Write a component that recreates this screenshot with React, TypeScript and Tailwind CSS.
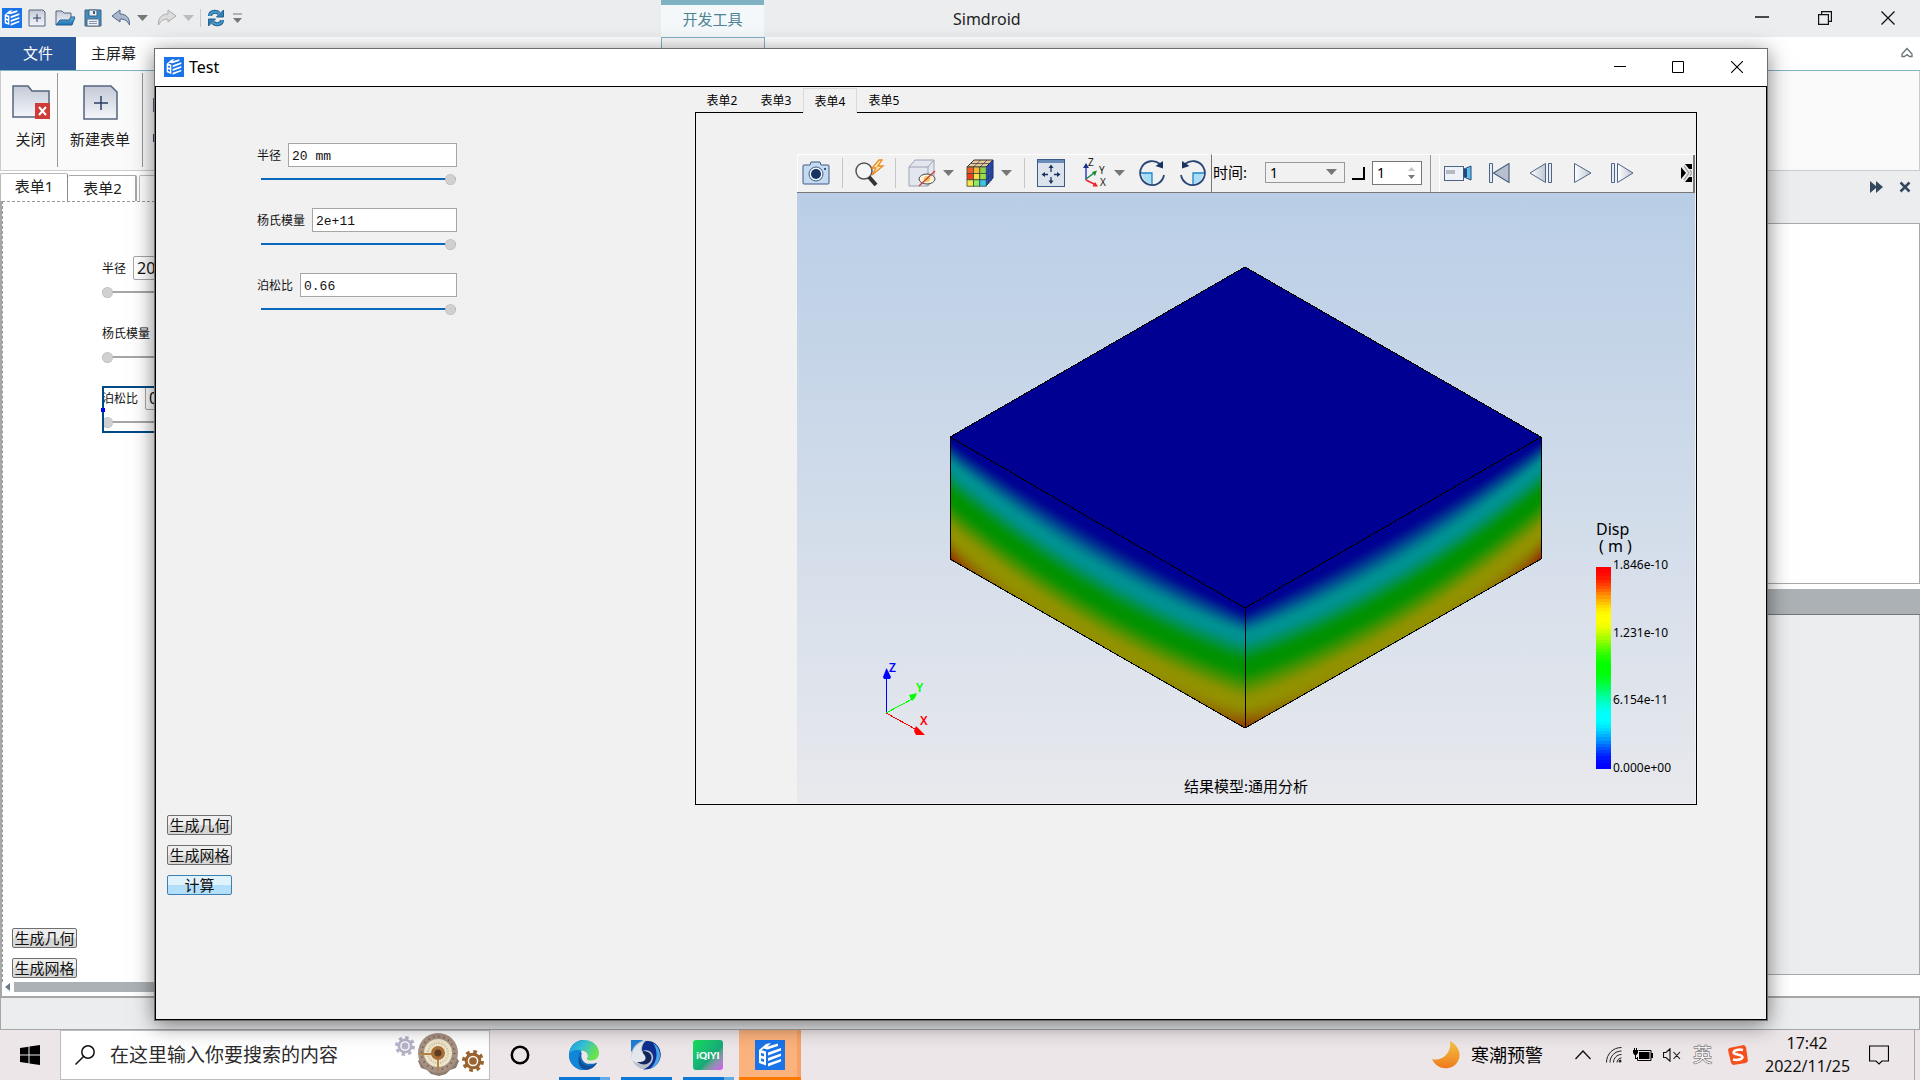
import { useState } from 'react';
import type { ReactNode } from 'react';
import clsx from 'clsx';

const JET = [
  [0, 0, 1],
  [0, 1, 1],
  [0, 1, 0],
  [1, 1, 0],
  [1, 0, 0],
];

// value 0..1 -> rgb, full is the brightest channel; eased so that every hue keeps a flat band
function jet(value: number, full: number) {
  const v = Math.min(Math.max(value, 0), 1) * 4;
  const i = Math.min(Math.floor(v), 3);
  const linear = v - i;
  const f = linear * linear * (3 - 2 * linear);
  const mix = JET[i].map((c, k) => Math.round((c + (JET[i + 1][k] - c) * f) * full));
  return `rgb(${mix[0]},${mix[1]},${mix[2]})`;
}

function lerp(stops: number[], value: number) {
  const v = Math.min(value * 4, 3.999);
  const i = Math.floor(v);
  return stops[i] + (stops[i + 1] - stops[i]) * (v - i);
}

// depth of every contour below the top edge: at the corners and in the middle of a face
const EDGE = [0.0, 0.23, 0.48, 0.78, 1.12];
const MIDDLE = [0.06, 0.38, 0.63, 0.93, 1.5];

function contour(value: number, x0: number, x1: number, y0: number, y1: number, height: number) {
  const points: string[] = [];
  for (let n = 0; n <= 32; n++) {
    const t = n / 32;
    const bulge = Math.pow(Math.max(Math.sin(Math.PI * t), 0), 0.8);
    const depth = lerp(EDGE, value) * (1 - bulge) + lerp(MIDDLE, value) * bulge;
    const x = x0 + (x1 - x0) * t;
    const y = y0 + (y1 - y0) * t + depth * height;
    points.push(`${x.toFixed(1)},${y.toFixed(1)}`);
  }
  return [...points, `${x1},620`, `${x0},620`].join(' ');
}

const levels = Array.from({ length: 96 }, (_, i) => i / 95);

function Model() {
  return (
    <svg viewBox="0 0 898 610" className="absolute inset-0 h-full w-full" aria-hidden="true">
      <defs>
        <clipPath id="leftFace"><path d="M153 244 448 415V535L153 366Z" /></clipPath>
        <clipPath id="rightFace"><path d="M448 415 744 244V366L448 535Z" /></clipPath>
      </defs>
      <path d="M448 74 744 244 448 415 153 244Z" fill="#000092" />
      <g clipPath="url(#leftFace)">
        <path d="M153 244 448 415V535L153 366Z" fill="#000092" />
        {levels.map((v) => (
          <polygon key={v} points={contour(v, 153, 448, 244, 415, 121)} fill={jet(v, 146)} />
        ))}
      </g>
      <g clipPath="url(#rightFace)">
        <path d="M448 415 744 244V366L448 535Z" fill="#000092" />
        {levels.map((v) => (
          <polygon key={v} points={contour(v, 448, 744, 415, 244, 121)} fill={jet(v, 146)} />
        ))}
      </g>
      <path
        d="M448 74 744 244V366L448 535 153 366V244ZM153 244 448 415 744 244M448 415V535"
        fill="none"
        stroke="#000"
        shapeRendering="crispEdges"
      />
      {/* axis triad */}
      <g fill="none" shapeRendering="crispEdges">
        <path d="M89 520V486" stroke="#00f" />
        <path d="M89 520 117 505" stroke="#0f0" />
        <path d="M89 520 120 537" stroke="#f00" />
      </g>
      <path d="M89.500 475 94 484 93 486H87L86 484Z" fill="#00f" />
      <path d="M112 502 120 500 118 505 115 508Z" fill="#0f0" />
      <path d="M119 533 128 542H119L117 538Z" fill="#f00" />
      <g fontFamily="Noto Sans" fontSize="12" fontWeight="600">
        <text x="92" y="479" fill="#00f">Z</text>
        <text x="119" y="499" fill="#0f0">Y</text>
        <text x="123" y="532" fill="#f00">X</text>
      </g>
    </svg>
  );
}

function Logo({ className }: { className?: string }) {
  return (
    <svg viewBox="0 0 30 30" className={className} aria-hidden="true">
      <rect width="30" height="30" fill="#1a73e8" />
      <path d="M4 10 11 4 16 3 12.500 6.500 23 3.500V6L12.500 9.500 8.500 8.500 6.500 10.200 11 11.500V25.500L4 23Z" fill="#fff" />
      <path d="M6 13 9 13.800V16.500L6 15.500ZM6 18.300 9 19.300V22L6 21Z" fill="#1a73e8" />
      <path d="M13 12.500 26 8V10.500L13 15.500ZM13 18 26 13.500V16L13 21ZM13 23.500 26 19V21.500L13 26.500Z" fill="#fff" />
    </svg>
  );
}

function Caret({ color = '#777' }: { color?: string }) {
  return (
    <svg viewBox="0 0 11 6" className="h-[6px] w-[11px] shrink-0" aria-hidden="true">
      <path d="M0 0H11L5.500 6Z" fill={color} />
    </svg>
  );
}

function Steel() {
  return (
    <defs>
      <linearGradient id="steel" x1="0" y1="0" x2="0" y2="1">
        <stop offset="0" stopColor="#c3c9d6" />
        <stop offset="1" stopColor="#f4f6fa" />
      </linearGradient>
      <linearGradient id="silver" x1="0" y1="0" x2="1" y2="0">
        <stop offset="0" stopColor="#fff" />
        <stop offset="1" stopColor="#bfc6d2" />
      </linearGradient>
      <linearGradient id="sky" x1="0" y1="0" x2="0" y2="1">
        <stop offset="0" stopColor="#5ab6e2" />
        <stop offset="1" stopColor="#2070b0" />
      </linearGradient>
    </defs>
  );
}

/* ---------- background window ---------- */

function QuickAccess() {
  return (
    <div className="flex h-full items-center pb-px pl-[2px]">
      <Logo className="h-5 w-5" />
      <button aria-label="新建" className="ml-[6px]">
        <svg viewBox="0 0 18 18" className="h-[18px] w-[18px]">
          <Steel />
          <path d="M1 1H15L17 3V17H1Z" fill="url(#steel)" stroke="#54657f" />
          <path d="M5 9H13M9 5V13" stroke="#2b3f66" />
        </svg>
      </button>
      <button aria-label="打开" className="ml-[9px]">
        <svg viewBox="0 0 20 18" className="h-[18px] w-5">
          <path d="M1 16V2H7L9 4H16V9" fill="url(#steel)" stroke="#54657f" />
          <path d="M1 16 5 11H14L16 8H20L17 16Z" fill="url(#sky)" stroke="#245f90" />
        </svg>
      </button>
      <button aria-label="保存" className="ml-[9px]">
        <svg viewBox="0 0 18 18" className="h-[18px] w-[18px]">
          <path d="M1 1H17V17H1Z" fill="#3d8ec4" stroke="#44617f" />
          <path d="M5 1H13V7H5Z" fill="#e9eef4" stroke="#44617f" />
          <path d="M10 2V5" stroke="#44617f" strokeWidth="2" />
          <path d="M3 10H15V17H3Z" fill="#eef1f5" stroke="#5b6f88" />
          <path d="M5 12.500H13M5 14.500H13" stroke="#8b97a8" />
        </svg>
      </button>
      <button aria-label="撤销" className="ml-[9px]">
        <svg viewBox="0 0 20 18" className="h-[18px] w-5">
          <path d="M1 7 9 1V5C16 5 19 10 18.500 16 16.500 11.500 13 10 9 10V13Z" fill="#a9b8cd" stroke="#50678a" />
        </svg>
      </button>
      <span className="ml-[6px] flex"><Caret /></span>
      <button aria-label="重做" className="ml-[9px]">
        <svg viewBox="0 0 20 18" className="h-[18px] w-5">
          <path d="M19 7 11 1V5C4 5 1 10 1.500 16 3.500 11.500 7 10 11 10V13Z" fill="#dcdcdc" stroke="#aaa" />
        </svg>
      </button>
      <span className="ml-[6px] flex"><Caret color="#bcbcbc" /></span>
      <span className="ml-[6px] h-[18px] w-px bg-[#c8c8c8]" />
      <button aria-label="刷新" className="ml-[6px]">
        <svg viewBox="0 0 18 18" className="h-[18px] w-[18px]">
          <path d="M3 7C3 2.500 9 1.500 12 4.500" fill="none" stroke="#27618c" strokeWidth="4" />
          <path d="M3 7C3 2.500 9 1.500 12 4.500" fill="none" stroke="#3f9bd0" strokeWidth="2" />
          <path d="M16.500 1V8H9.500Z" fill="#2f82ba" stroke="#27618c" />
          <path d="M15 11C15 15.500 9 16.500 6 13.500" fill="none" stroke="#27618c" strokeWidth="4" />
          <path d="M15 11C15 15.500 9 16.500 6 13.500" fill="none" stroke="#3f9bd0" strokeWidth="2" />
          <path d="M1.500 17V10H8.500Z" fill="#2f82ba" stroke="#27618c" />
        </svg>
      </button>
      <svg viewBox="0 0 9 11" className="ml-2 h-[11px] w-[9px]" aria-hidden="true">
        <path d="M0 1H9" stroke="#777" />
        <path d="M0 5H9L4.500 10Z" fill="#777" />
      </svg>
    </div>
  );
}

function TitleBar() {
  return (
    <header className="relative flex h-[37px] shrink-0 items-center justify-between bg-[#ecedef]">
      <QuickAccess />
      <div className="absolute left-[661px] top-0 flex h-[37px] w-[103px] items-center justify-center border-t-[5px] border-[#7fb2c2] bg-[#f4f8fb] pb-1 text-[15px] text-[#4b8494]">
        开发工具
      </div>
      <div className="absolute left-[661px] top-[37px] z-10 h-[34px] w-[104px] border border-b-0 border-[#7fb2c2] bg-[#fafafa]" />
      <h1 className="absolute left-[953px] text-base text-[#222]">Simdroid</h1>
      <div className="flex items-center pb-px pr-px">
        <button aria-label="最小化" className="flex w-[63px] justify-center">
          <svg viewBox="0 0 14 14" className="h-[14px] w-[14px]"><path d="M0 6H14" stroke="#111" strokeWidth="1.500" /></svg>
        </button>
        <button aria-label="还原" className="flex w-[63px] justify-center">
          <svg viewBox="0 0 14 14" className="h-[14px] w-[14px]" fill="none" stroke="#111" strokeWidth="1.200">
            <path d="M.6 3.600H10.400V13.400H.6ZM3.600 3.600V.6H13.400V10.400H10.400" />
          </svg>
        </button>
        <button aria-label="关闭" className="flex w-[63px] justify-center">
          <svg viewBox="0 0 14 14" className="h-[14px] w-[14px]"><path d="M.5.5 13.500 13.500M13.500.5.5 13.500" stroke="#111" strokeWidth="1.300" /></svg>
        </button>
      </div>
    </header>
  );
}

function Ribbon() {
  return (
    <div className="shrink-0 text-[15px] text-[#222]">
      <nav className="flex h-[34px] items-center justify-between border-b border-[#7fb2c2] bg-white">
        <div className="flex h-full items-center">
          <button className="h-full w-[76px] bg-[#2a579a] pb-px text-white">文件</button>
          <button className="ml-[15px]">主屏幕</button>
        </div>
        <button aria-label="折叠功能区" className="mr-[7px] pb-[2px]">
          <svg viewBox="0 0 12 12" className="h-3 w-3">
            <path d="M1 7 6 1.500 11 7V9.500H8.500L6 7.500 3.500 9.500H1Z" fill="none" stroke="#6b7177" strokeWidth="1.300" />
          </svg>
        </button>
      </nav>
      <div className="flex h-[100px] items-start border border-t-0 border-[#ccc] bg-[#fafafa]">
        <button className="flex h-full w-[56px] flex-col items-center pl-[3px] pt-[14px]">
          <svg viewBox="0 0 38 34" className="h-[34px] w-[38px]">
            <path d="M1 1H16L20 6H37V32H1Z" fill="url(#steel)" stroke="#54657f" strokeWidth="1.500" />
            <rect x="23" y="18" width="15" height="16" fill="#cf3b37" />
            <path d="M27 22 34 30M34 22 27 30" stroke="#fff" strokeWidth="2" />
          </svg>
          <span className="mt-[9px] whitespace-nowrap">关闭</span>
        </button>
        <span className="mt-[2px] h-[94px] w-px bg-[#999]" />
        <button className="flex w-[84px] flex-col items-center pt-[14px]">
          <svg viewBox="0 0 35 35" className="h-[35px] w-[35px]">
            <path d="M1 1H28L34 7V34H1Z" fill="url(#steel)" stroke="#54657f" strokeWidth="1.500" />
            <path d="M11 18H25M18 11V25" stroke="#2b3f66" strokeWidth="1.500" />
          </svg>
          <span className="mt-2 whitespace-nowrap">新建表单</span>
        </button>
        <span className="mt-[2px] h-[94px] w-px bg-[#999]" />
        <svg viewBox="0 0 16 60" className="ml-[10px] mt-[24px] h-[60px] w-4" aria-hidden="true">
          <rect x=".5" y="3.500" width="15" height="13" fill="url(#steel)" stroke="#54657f" />
          <rect x=".5" y="39.500" width="15" height="7" fill="#e8edf5" stroke="#2b3f66" />
        </svg>
      </div>
    </div>
  );
}

const buttonFace =
  'h-5 w-[65px] rounded-[2px] border border-[#707070] bg-linear-to-b from-[#efefef] from-50% to-[#d6d6d6] to-50% text-[15px] leading-[17px] text-[#111] whitespace-nowrap';

type FieldProps = {
  id: string;
  label: string;
  defaultValue: string;
  position: number;
  design?: boolean;
};

function Field({ id, label, defaultValue, position, design }: FieldProps) {
  const [level, setLevel] = useState(position);
  return (
    <div className="w-[200px]">
      <div className="flex h-6 items-center">
        <label htmlFor={id} className="shrink-0 whitespace-nowrap pt-[2px] text-xs text-[#111]">{label}</label>
        <input
          id={id}
          type="text"
          defaultValue={defaultValue}
          className={clsx(
            'ml-[7px] h-6 w-0 flex-1 border border-[#a6a6a6] bg-white px-[3px] text-[#111] outline-none',
            design ? 'rounded-[2px] text-base' : 'pt-[2px] [font-family:"Liberation_Mono",monospace] text-[13px]'
          )}
        />
      </div>
      <input
        type="range"
        aria-label={label}
        value={level}
        onChange={(e) => setLevel(Number(e.target.value))}
        className={clsx(
          'mt-[6px] block h-[11px] appearance-none bg-transparent [&::-webkit-slider-runnable-track]:h-[2px] [&::-webkit-slider-thumb]:mt-[-4px] [&::-webkit-slider-thumb]:h-[11px] [&::-webkit-slider-thumb]:w-[11px] [&::-webkit-slider-thumb]:appearance-none [&::-webkit-slider-thumb]:rounded-full [&::-webkit-slider-thumb]:border [&::-webkit-slider-thumb]:border-dotted [&::-webkit-slider-thumb]:border-[#b4b4b4] [&::-webkit-slider-thumb]:bg-[#d0d0d0]',
          design
            ? 'w-[200px] [&::-webkit-slider-runnable-track]:bg-[#a6a6a6]'
            : 'ml-1 w-[195px] [&::-webkit-slider-runnable-track]:bg-[#0a67bb]'
        )}
      />
    </div>
  );
}

function Designer() {
  return (
    <section className="flex min-w-0 flex-1 flex-col bg-white">
      <div className="flex h-[30px] shrink-0 items-end bg-white text-[15px] text-[#222]" role="tablist">
        <button role="tab" aria-selected="true" className="h-[28px] w-[68px] rounded-t-[2px] border border-b-0 border-[#bbb] border-r-[#8a8a8a] pb-[2px]">表单1</button>
        <button role="tab" aria-selected="false" className="h-[26px] w-[69px] rounded-t-[2px] border-r-2 border-t border-[#a8a8a8] pl-[2px]">表单2</button>
        <button role="tab" aria-selected="false" className="ml-[2px] h-[26px] w-[69px] rounded-t-[2px] border-l border-r-2 border-t border-[#bbb]">表单3</button>
      </div>
      <div className="flex flex-1 flex-col justify-between border-l-2 border-[#a6a6a6]">
        <div className="flex flex-1 flex-col justify-between border-l border-t border-dashed border-[#999]">
          <div className="flex flex-col gap-[24px] pl-[99px] pt-[54px]">
            <Field id="designRadius" label="半径" defaultValue="20" position={0} design />
            <Field id="designModulus" label="杨氏模量" defaultValue="2e+11" position={0} design />
            <div className="relative pb-[6px] outline-2 -outline-offset-2 outline-[#004a85]">
              <Field id="designPoisson" label="泊松比" defaultValue="0.3" position={0} design />
              <span className="absolute -left-px top-[22px] h-1 w-1 bg-[#00f]" />
            </div>
          </div>
          <div className="flex flex-col items-start gap-[10px] pb-1 pl-[9px]">
            <button className={buttonFace}>生成几何</button>
            <button className={buttonFace}>生成网格</button>
          </div>
        </div>
        <div className="flex h-[14px] items-start pl-[3px]">
          <svg viewBox="0 0 5 8" className="mt-px h-2 w-[5px]" aria-hidden="true"><path d="M5 0V8L0 4Z" fill="#6a7a88" /></svg>
          <span className="ml-1 h-[10px] flex-1 bg-[#acb1b5]" />
        </div>
      </div>
    </section>
  );
}

function Dock() {
  return (
    <aside className="flex w-[300px] shrink-0 flex-col">
      <div className="flex h-[53px] shrink-0 items-start justify-end gap-4 border-b border-[#a6a9ac] bg-[#ecedef] pr-[9px] pt-[10px]">
        <button aria-label="展开">
          <svg viewBox="0 0 14 12" className="h-3 w-[14px]"><path d="M1 0 7 5V0L14 6 7 12V7L1 12Z" fill="#34495e" /></svg>
        </button>
        <button aria-label="关闭面板">
          <svg viewBox="0 0 12 12" className="h-3 w-3"><path d="M1.500 1.500 10.500 10.500M10.500 1.500 1.500 10.500" stroke="#34495e" strokeWidth="2.500" /></svg>
        </button>
      </div>
      <div className="h-[360px] border-b border-r border-[#a6a9ac] bg-white" />
      <div className="h-[5px] bg-white" />
      <div className="h-[26px] border-b border-[#70767a] bg-[#acb1b5]" />
      <div className="flex-1 border-b border-r border-[#a6a9ac] bg-[#ecedef]" />
      <div className="h-[21px] bg-white" />
    </aside>
  );
}

/* ---------- Test dialog ---------- */

function Tool({ label, className, children }: { label: string; className?: string; children: ReactNode }) {
  return (
    <button aria-label={label} className={clsx('flex shrink-0 items-center justify-center', className)}>
      {children}
    </button>
  );
}

function Divider() {
  return <span className="ml-3 h-[30px] w-px shrink-0 bg-[#c6c6c6]" />;
}

const cells = ['#f05a28', '#f7b733', '#8fd14f', '#f33b1c', '#f9e04a', '#9be04a', '#f5e34a', '#8fe86a', '#39c8e8'];

function ViewToolbar() {
  return (
    <div className="flex h-[39px] items-center border-b border-[#777] bg-[#f1f1f1]">
      <div className="flex h-full items-center border-l border-t border-white pb-[2px]">
        <Tool label="截图" className="ml-1">
          <svg viewBox="0 0 28 24" className="h-6 w-7">
            <path d="M1 5Q1 4 2 4H8L9 1H18L19 4H26Q27 4 27 5V22Q27 23 26 23H2Q1 23 1 22Z" fill="#c5daf0" stroke="#3c5a86" />
            <circle cx="14" cy="13" r="7" fill="#eef5fc" stroke="#3c5a86" />
            <circle cx="14" cy="13" r="5" fill="#1a3260" />
            <rect x="22" y="7" width="2" height="2" fill="#3c5a86" />
          </svg>
        </Tool>
        <Divider />
        <Tool label="快速查看" className="ml-3">
          <svg viewBox="0 0 30 28" className="h-7 w-[30px]">
            <circle cx="9" cy="12" r="8" fill="#f3f5f7" stroke="#555" strokeWidth="1.500" />
            <path d="M14 18 21 26" stroke="#333" strokeWidth="4" />
            <path d="M24 1 17 9H21L17 16 28 7H23L27 1Z" fill="#ffe7b0" stroke="#ee8a22" strokeWidth="1.300" />
          </svg>
        </Tool>
        <span className="ml-[10px] h-[30px] w-px shrink-0 bg-[#c6c6c6]" />
        <Tool label="显示隐藏" className="ml-3">
          <svg viewBox="0 0 28 28" className="h-7 w-7">
            <path d="M1 8 7 1H26V20L20 27H1Z" fill="#e3e6ee" stroke="#9aa2b4" />
            <path d="M1 8H20V27M20 8 26 1" fill="none" stroke="#9aa2b4" />
            <ellipse cx="19" cy="20" rx="8" ry="5" fill="#fff1d0" stroke="#3c4a60" />
            <circle cx="19" cy="20" r="3" fill="#f2c36a" />
            <path d="M11 27 27 12" stroke="#c9483a" strokeWidth="1.500" />
          </svg>
        </Tool>
        <span className="ml-[7px] flex"><Caret /></span>
        <Tool label="云图" className="ml-3">
          <svg viewBox="0 0 28 28" className="h-7 w-7">
            <path d="M1 8 8 1H27L20 8Z" fill="#e8c79a" stroke="#333" />
            <path d="M20 8 27 1V19L20 27Z" fill="#1f4fd8" stroke="#1b2b66" />
            {cells.map((fill, i) => (
              <rect key={i} x={1 + (i % 3) * 6.4} y={8 + Math.floor(i / 3) * 6.4} width="6.400" height="6.400" fill={fill} stroke="#3a4a3a" strokeWidth=".8" />
            ))}
            <path d="M22.500 6V24.500M25 3.500V22M20 14.500 27 7.500M20 21 27 13.500M7.500 8 14.500 1M14 8 21 1M4.500 4.500H23.500" stroke="#334" strokeWidth=".7" />
          </svg>
        </Tool>
        <span className="ml-[7px] flex"><Caret /></span>
        <Divider />
        <Tool label="适应窗口" className="ml-3">
          <svg viewBox="0 0 28 28" className="h-7 w-7">
            <rect x=".5" y=".5" width="27" height="27" fill="#dde3ec" stroke="#3c5a86" />
            <path d="M1 2.500H27" stroke="#6b8cba" strokeWidth="3" />
            <path d="M14 8V13M14 18V23M6 15.500H11M17 15.500H22" stroke="#1a3260" strokeWidth="1.300" />
            <path d="M14 5.500 16.500 9H11.500ZM14 25 16.500 21.500H11.500ZM4.500 15.500 8 13V18ZM23.500 15.500 20 13V18Z" fill="#1a3260" />
          </svg>
        </Tool>
        <Tool label="视图方向" className="ml-[18px]">
          <svg viewBox="0 0 24 30" className="h-[30px] w-6 overflow-visible">
            <path d="M3 22V9" stroke="#2744c4" strokeWidth="1.500" />
            <path d="M3 5 6 10H0Z" fill="#1c2f8a" />
            <path d="M3 21 11 15" stroke="#1a8a3a" strokeWidth="1.500" />
            <path d="M14 12.500 12 18 9 14Z" fill="#1a8a3a" />
            <path d="M3 22 12 26.500" stroke="#e22" strokeWidth="1.500" />
            <path d="M15 28.500 9.500 28.500 12 24Z" fill="#e22" />
            <g fontFamily="Noto Sans" fontSize="10" fill="#222">
              <text x="5" y="8">Z</text>
              <text x="16" y="16">Y</text>
              <text x="17" y="28">X</text>
            </g>
          </svg>
        </Tool>
        <span className="ml-[7px] flex"><Caret /></span>
        <Tool label="顺时针旋转" className="ml-[13px]">
          <svg viewBox="0 0 28 28" className="h-7 w-7">
            <path d="M14 14V25A11 11 0 0 1 4 14Z" fill="#a9dcf5" />
            <path d="M2 14H14V26M8 14H14V20" fill="none" stroke="#1f86c8" strokeWidth="1.300" />
            <path d="M22 5A12 12 0 1 0 26 16" fill="none" stroke="#2b4778" strokeWidth="1.800" />
            <path d="M25 2V9.500L17.500 7Z" fill="#1a3260" />
          </svg>
        </Tool>
        <Tool label="逆时针旋转" className="ml-[13px]">
          <svg viewBox="0 0 28 28" className="h-7 w-7">
            <path d="M14 14V25A11 11 0 0 0 24 14Z" fill="#a9dcf5" />
            <path d="M26 14H14V26M20 14H14V20" fill="none" stroke="#1f86c8" strokeWidth="1.300" />
            <path d="M6 5A12 12 0 1 1 2 16" fill="none" stroke="#2b4778" strokeWidth="1.800" />
            <path d="M3 2V9.500L10.500 7Z" fill="#1a3260" />
          </svg>
        </Tool>
      </div>
      <div className="ml-1 flex h-full flex-1 items-center border-l border-t border-l-[#777] border-t-white">
        <label htmlFor="time" className="ml-px w-[52px] whitespace-nowrap pb-[2px] text-[15px] text-black">时间:</label>
        <div className="relative mb-[2px] h-[21px] w-20">
          <select id="time" className="block h-full w-full appearance-none border border-[#999] pl-1 text-sm leading-[18px] text-black outline-none">
            <option>1</option>
          </select>
          <span className="pointer-events-none absolute right-2 top-[7px]"><Caret /></span>
        </div>
        <button aria-label="循环" className="mb-px ml-[7px] h-[13px] w-[13px] border-b-2 border-r-2 border-black" />
        <div className="mb-[2px] ml-[7px] flex h-6 w-[50px] items-center justify-between border border-[#777] bg-white pl-1 pr-[6px]">
          <input id="step" aria-label="步长" defaultValue="1" className="w-6 text-sm text-black outline-none" />
          <svg viewBox="0 0 7 12" className="h-3 w-[7px]" aria-hidden="true">
            <path d="M0 4H7L3.500 0Z" fill="#c4c4c4" />
            <path d="M0 8H7L3.500 12Z" fill="#777" />
          </svg>
        </div>
        <span className="ml-2 h-full w-px bg-[#999]" />
        <div className="ml-2 flex h-full flex-1 items-center border-l border-r-2 border-l-white border-r-[#777] pb-[2px]">
          <Tool label="录制" className="ml-1">
            <svg viewBox="0 0 28 18" className="h-[18px] w-7">
              <rect x=".5" y="2.500" width="19" height="14" fill="#eef1f5" stroke="#4c6488" />
              <rect x="2" y="6" width="9" height="4" fill="#b5bac2" />
              <path d="M20 5 27 2V16L20 13Z" fill="#5cc0ee" stroke="#244a78" />
              <path d="M20 5H23V13H20Z" fill="#244a78" />
            </svg>
          </Tool>
          <Tool label="第一帧" className="ml-[17px]">
            <svg viewBox="0 0 21 20" className="h-5 w-[21px]">
              <path d="M.5.5H3.500V19.500H.5Z" fill="#e8ecf3" stroke="#4c6488" />
              <path d="M20 .5V19.500L4.500 10Z" fill="#b9c0cd" stroke="#4c6488" strokeWidth="1.200" />
            </svg>
          </Tool>
          <Tool label="上一帧" className="ml-[19px]">
            <svg viewBox="0 0 23 20" className="h-5 w-[23px]">
              <path d="M16.500.5V19.500L1 10Z" fill="url(#silver)" stroke="#4c6488" />
              <path d="M19.500.5H22.500V19.500H19.500Z" fill="#e8ecf3" stroke="#4c6488" />
            </svg>
          </Tool>
          <Tool label="播放" className="ml-[22px]">
            <svg viewBox="0 0 18 20" className="h-5 w-[18px]">
              <path d="M.5.5V19.500L17 10Z" fill="url(#silver)" stroke="#4c6488" />
            </svg>
          </Tool>
          <Tool label="下一帧" className="ml-[19px]">
            <svg viewBox="0 0 23 20" className="h-5 w-[23px]">
              <path d="M.5.5H3.500V19.500H.5Z" fill="#e8ecf3" stroke="#4c6488" />
              <path d="M6.500.5V19.500L22 10Z" fill="url(#silver)" stroke="#4c6488" />
            </svg>
          </Tool>
          <Tool label="更多" className="ml-auto mr-px">
            <svg viewBox="0 0 11 18" className="h-[18px] w-[11px]">
              <path d="M0 3 5 9 0 15ZM4 0H11V5H8ZM8 13H11V18H4Z" fill="#000" />
              <path d="M3 2 8 9 3 16M9 6 11 9 9 12" fill="none" stroke="#aaa" strokeWidth="1.500" />
            </svg>
          </Tool>
        </div>
      </div>
    </div>
  );
}

const bands = Array.from({ length: 64 }, (_, i) => 1 - i / 63);
const ticks = ['1.846e-10', '1.231e-10', '6.154e-11', '0.000e+00'];

function Legend() {
  return (
    <div className="absolute bottom-[27px] right-[17px] w-[82px] text-black">
      <div className="text-base leading-[17px]">Disp</div>
      <div className="pl-[3px] text-base leading-[17px]">( m )</div>
      <div className="mt-[2px] flex h-[219px] gap-[2px]">
        <div className="mt-[10px] flex h-[202px] w-[15px] flex-col">
          {bands.map((v) => (
            <span key={v} className="flex-1" style={{ backgroundColor: jet(v, 255) }} />
          ))}
        </div>
        <div className="flex flex-col justify-between text-xs leading-4">
          {ticks.map((tick) => (
            <span key={tick}>{tick}</span>
          ))}
        </div>
      </div>
    </div>
  );
}

function Viewer() {
  return (
    <div className="mb-px ml-[101px] mr-px mt-[41px]">
      <ViewToolbar />
      <div className="relative h-[610px] bg-linear-to-b from-[#b9cee6] to-[#e8e9ed]">
        <Model />
        <Legend />
        <p className="absolute inset-x-0 bottom-[7px] text-center text-[15px] leading-5 text-black">结果模型:通用分析</p>
      </div>
    </div>
  );
}

function TestDialog() {
  const [tab, setTab] = useState('表单4');
  return (
    <div
      role="dialog"
      aria-label="Test"
      className="absolute bottom-[9px] left-[154px] right-[152px] top-[48px] z-20 flex flex-col border border-[#6e6e6e] bg-white shadow-[0_4px_20px_rgba(0,0,0,0.5)]"
    >
      <div className="flex h-[37px] shrink-0 items-center justify-between pb-[2px]">
        <div className="flex items-center gap-[5px] pl-[9px]">
          <Logo className="h-5 w-5" />
          <h2 className="text-base text-black">Test</h2>
        </div>
        <div className="flex pr-px">
          <button aria-label="最小化" className="flex w-[58px] justify-center">
            <svg viewBox="0 0 12 12" className="h-3 w-3"><path d="M0 5.500H12" stroke="#000" /></svg>
          </button>
          <button aria-label="最大化" className="flex w-[58px] justify-center">
            <svg viewBox="0 0 12 12" className="h-3 w-3"><path d="M.5.5H11.500V11.500H.5Z" fill="none" stroke="#000" /></svg>
          </button>
          <button aria-label="关闭" className="flex w-[59px] justify-center">
            <svg viewBox="0 0 12 12" className="h-3 w-3"><path d="M0 0 12 12M12 0 0 12" stroke="#000" strokeWidth="1.100" /></svg>
          </button>
        </div>
      </div>
      <div className="flex flex-1 border border-black bg-[#f1f1f1]">
        <div className="flex w-[539px] shrink-0 flex-col justify-between pb-[124px] pl-[11px] pt-[56px]">
          <div className="ml-[90px] flex flex-col gap-[24px]">
            <Field id="radius" label="半径" defaultValue="20 mm" position={100} />
            <Field id="modulus" label="杨氏模量" defaultValue="2e+11" position={100} />
            <Field id="poisson" label="泊松比" defaultValue="0.66" position={100} />
          </div>
          <div className="flex flex-col items-start gap-[10px]">
            <button className={buttonFace}>生成几何</button>
            <button className={buttonFace}>生成网格</button>
            <button className="h-5 w-[65px] rounded-[2px] border border-[#3c7fb1] bg-linear-to-b from-[#e0f2fc] from-50% to-[#b3dffa] to-50% text-[15px] leading-[17px] text-[#111]">计算</button>
          </div>
        </div>
        <div className="mr-[69px] min-w-0 flex-1 pt-px">
          <div role="tablist" className="flex h-6">
            {['表单2', '表单3', '表单4', '表单5'].map((name) => (
              <button
                key={name}
                role="tab"
                aria-selected={tab === name}
                onClick={() => setTab(name)}
                className={clsx(
                  'w-[54px] border pt-[2px] text-xs text-black',
                  tab === name ? 'relative z-10 -mb-px border-[#d9d9d9] border-b-[#f1f1f1] bg-[#f1f1f1]' : 'border-transparent'
                )}
              >
                {name}
              </button>
            ))}
          </div>
          <div className="flow-root border border-black">
            <Viewer />
          </div>
        </div>
      </div>
    </div>
  );
}

/* ---------- taskbar ---------- */

function Gear({ x, y, r, color }: { x: number; y: number; r: number; color: string }) {
  const tooth = (Math.PI * 2 * r * 0.82) / 16;
  return (
    <g fill="none" stroke={color}>
      <circle cx={x} cy={y} r={r * 0.82} strokeWidth={r * 0.36} strokeDasharray={tooth} />
      <circle cx={x} cy={y} r={r * 0.62} strokeWidth={r * 0.28} />
      <circle cx={x} cy={y} r={r * 0.35} fill={color} stroke="none" />
    </g>
  );
}

function SearchArt() {
  return (
    <svg viewBox="0 0 92 46" className="ml-auto mr-[3px] h-[46px] w-[92px]" aria-hidden="true">
      <Gear x={11} y={14} r={10} color="#b6b3c8" />
      <path d="M24 29 28 25H62L65 29 62 36 56 38 52 42 45 44 37 42 33 38 27 36Z" fill="#8d7a70" />
      <circle cx="44" cy="21" r="20" fill="#a58f80" />
      <circle cx="44" cy="21" r="16.500" fill="none" stroke="#6e5b4e" strokeWidth="2" strokeDasharray="1 4.180" />
      <circle cx="44" cy="21" r="14" fill="#ece5cb" />
      <circle cx="44" cy="21" r="10" fill="none" stroke="#cbb994" strokeWidth="2" strokeDasharray="1 1.500" />
      <path d="M27 22H44V38" fill="none" stroke="#b98245" strokeWidth="2" />
      <circle cx="44" cy="21" r="7" fill="#a86e38" />
      <circle cx="44" cy="21" r="3.500" fill="#5e3d22" />
      <Gear x={79} y={29} r={11} color="#9a6430" />
    </svg>
  );
}

function EdgeIcon() {
  return (
    <svg viewBox="0 0 30 30" className="h-[30px] w-[30px]">
      <defs>
        <linearGradient id="edgeTop" x1="0" y1="0" x2="1" y2=".4">
          <stop offset="0" stopColor="#1b9de2" />
          <stop offset=".5" stopColor="#35c1d6" />
          <stop offset="1" stopColor="#6be34e" />
        </linearGradient>
      </defs>
      <path d="M15 0C6 0 0 7 0 15 0 23 6 30 15 30 21 30 26 27 28 22.500 25 24 20 24.500 17 22 13 19 15 17 12 12Z" fill="#0f6cbf" />
      <path d="M0 14C1 5 8 0 15 0 24 0 30 6 30 13 30 18 26 20.500 22 20.500 18 20.500 17 19 18.500 17 19.500 14 17 11 12.500 10.500 7 10 2 11 0 14Z" fill="url(#edgeTop)" />
      <path d="M0 15C2 10 8 9 12 11 8 15 9 22 14 27 15.500 28.500 17 29.500 18 29.700 8 32 0 24 0 15Z" fill="#1486d8" />
      <path d="M11.500 15C9.500 20 13 25 19 26 23 26.300 26 24.500 28 22.500 25 29 18 31 14 29 9 26 8 19 11.500 15Z" fill="#114f96" />
      <path d="M12.500 14C11.500 19 15 24 21 24 18 22 17 20 18.500 17 19 14 15 11 12.500 14Z" fill="#ede6e8" />
    </svg>
  );
}

function BrowserIcon() {
  return (
    <svg viewBox="0 0 30 30" className="h-[30px] w-[30px]">
      <path d="M0 0H12L0 12Z" fill="#1d7fd6" />
      <circle cx="15" cy="15" r="14.500" fill="#b9c0cc" />
      <path d="M15 1C24 0 31 8 29.500 17 28 25 20 30 12 29.500 19 27 23 21 22 16 21 11 16 9 11 11 11 6 12 3 15 1Z" fill="#0e2f8f" />
      <path d="M22 3C29 7 31 16 27 23 25 26 22 28 19 29 26 22 28 12 22 3Z" fill="#4aa6ec" />
      <path d="M1 20C0 11 4 4 14 1 9 6 8 11 13 13.500 18 15.500 20 20 15 24 10 25 4 23 1 20Z" fill="#e4e8ee" />
      <path d="M12 11C18 11 22 15 20 20 18 25 11 26 6 22 11 22.500 15 21 14.500 17.500 14 14 11 14 12 11Z" fill="#12265c" />
    </svg>
  );
}

function IqiyiIcon() {
  return (
    <span className="flex h-[30px] w-[30px] items-center justify-center rounded-[3px] bg-linear-to-br from-[#18d860] from-10% via-[#18a878] via-60% to-[#d94df5] [font-family:Lato,sans-serif] text-[10px] font-black text-white">
      iQIYI
    </span>
  );
}

function TaskApp({ label, icon, underline }: { label: string; icon: ReactNode; underline: 'single' | 'stack' | 'active' }) {
  return (
    <button
      aria-label={label}
      className={clsx('relative flex h-full w-[62px] items-center justify-center', underline === 'active' && 'border-r-4 border-[#f9a066] bg-[#fbb27c]')}
    >
      <span className={clsx(underline === 'active' && 'pl-1')}>{icon}</span>
      {underline === 'active' ? (
        <span className="absolute bottom-0 left-0 h-[3px] w-[62px] bg-[#ff7800]" />
      ) : (
        <span className="absolute bottom-0 left-[6px] flex h-[3px] w-[51px] bg-[#0b78d7]">
          {underline === 'stack' && <span className="ml-auto w-[10px] bg-[#62abe6]" />}
        </span>
      )}
    </button>
  );
}

function Taskbar() {
  return (
    <footer className="flex h-[50px] shrink-0 items-center bg-[#ede6e8] text-black">
      <button aria-label="开始" className="flex w-[60px] justify-center">
        <svg viewBox="0 0 20 20" className="h-5 w-5">
          <path d="M0 3 8.500 1.800V9.500H0ZM9.500 1.600 20 0V9.500H9.500ZM0 10.500H8.500V18.200L0 17ZM9.500 10.500H20V20L9.500 18.400Z" />
        </svg>
      </button>
      <div className="flex h-full w-[430px] items-center border border-[#bdbdbd] bg-white pl-[14px]">
        <svg viewBox="0 0 20 20" className="h-5 w-5 shrink-0" fill="none" stroke="#111" strokeWidth="1.500" aria-hidden="true">
          <circle cx="13" cy="7" r="6.200" />
          <path d="M8.500 11.500.5 19.500" />
        </svg>
        <input
          type="text"
          aria-label="搜索"
          placeholder="在这里输入你要搜索的内容"
          className="ml-[15px] w-[260px] text-[19px] outline-none placeholder:text-[#2b2b2b]"
        />
        <SearchArt />
      </div>
      <button aria-label="Cortana" className="flex w-[63px] justify-center pr-[3px]">
        <svg viewBox="0 0 20 20" className="h-5 w-5"><circle cx="10" cy="10" r="8.200" fill="none" stroke="#000" strokeWidth="2.500" /></svg>
      </button>
      <TaskApp label="Edge" icon={<EdgeIcon />} underline="stack" />
      <TaskApp label="浏览器" icon={<BrowserIcon />} underline="single" />
      <TaskApp label="iQIYI" icon={<IqiyiIcon />} underline="stack" />
      <TaskApp label="Simdroid" icon={<Logo className="h-[30px] w-[30px]" />} underline="active" />

      <div className="ml-auto flex h-full items-center">
        <svg viewBox="0 0 28 28" className="h-7 w-7" aria-hidden="true">
          <defs>
            <linearGradient id="moon" x1="0" y1="0" x2="0" y2="1">
              <stop offset="0" stopColor="#f6c544" />
              <stop offset="1" stopColor="#ee7a1c" />
            </linearGradient>
          </defs>
          <path d="M18 0C26 4 30 13 26 20 21 30 5 30 0 18 10 21 20 12 18 0Z" fill="url(#moon)" />
        </svg>
        <span className="ml-[11px] text-[18px]">寒潮预警</span>
        <button aria-label="显示隐藏的图标" className="ml-8">
          <svg viewBox="0 0 16 10" className="h-[10px] w-4"><path d="M.5 9 8 1 15.500 9" fill="none" stroke="#111" strokeWidth="1.300" /></svg>
        </button>
        <svg viewBox="0 0 16 16" className="ml-[15px] h-4 w-4" fill="none" stroke="#222" aria-hidden="true">
          <path d="M.5 15.500C.5 7 7 .5 15.500.5M4 15.500C4 9 9 4 15.500 4M7.500 15.500C7.500 11 11 7.500 15.500 7.500M11 15.500C11 13 13 11 15.500 11" />
          <circle cx="14" cy="14" r="1.500" fill="#222" stroke="none" />
        </svg>
        <svg viewBox="0 0 20 14" className="ml-[11px] h-[14px] w-5" aria-hidden="true">
          <path d="M5.500 2.500H18V12.500H4.500V9" fill="none" stroke="#000" />
          <path d="M6 4H16.500V11H6ZM18 5H20V10H18ZM0 2H5V5L3.500 7H1.500L0 5ZM1 0H2V2H1ZM3 0H4V2H3ZM2 7H3V10H5V11H2Z" />
        </svg>
        <svg viewBox="0 0 18 14" className="ml-[10px] h-[14px] w-[18px]" fill="none" stroke="#111" strokeWidth="1.100" aria-hidden="true">
          <path d="M.5 4.500H3L7 .8V13.200L3 9.500H.5ZM10.500 4 17 11M17 4 10.500 11" />
        </svg>
        <span className="ml-3 text-[19px] leading-6 text-[#f4eff0] [-webkit-text-stroke:1px_#555] [paint-order:stroke]">英</span>
        <svg viewBox="0 0 20 20" className="ml-4 h-5 w-5" aria-hidden="true">
          <path d="M1 3 16 0 18 2 20 16 18 18 5 20 3 18 0 5Z" fill="#f4511e" />
          <path d="M15 5C11 4 6 5 5.500 7.500 5.500 10 14 9 14.500 12 14.500 14.500 9 15.500 5 14.500" fill="none" stroke="#fff" strokeWidth="2.500" />
        </svg>
        <div className="ml-[17px] w-[84px] text-center text-base leading-[23px] text-[#111]">
          <div>17:42</div>
          <div>2022/11/25</div>
        </div>
        <button aria-label="通知" className="ml-5">
          <svg viewBox="0 0 20 20" className="h-5 w-5"><path d="M.5 1H19.500V16H13L10 19 7 16H.5Z" fill="none" stroke="#000" strokeWidth="1.200" /></svg>
        </button>
        <span className="ml-[25px] mr-[5px] h-full w-px bg-[#aaa]" />
      </div>
    </footer>
  );
}

export default function App() {
  return (
    <div className="flex h-screen flex-col overflow-hidden [font-family:'Noto_Sans','Noto_Sans_CJK_SC',sans-serif]">
      <div className="relative flex min-h-0 flex-1 flex-col bg-white">
        <TitleBar />
        <Ribbon />
        <div className="flex min-h-0 flex-1">
          <Designer />
          <Dock />
        </div>
        <div className="h-[34px] shrink-0 border border-t-2 border-[#a6a6a6] bg-[#ecedef]" />
        <TestDialog />
      </div>
      <Taskbar />
    </div>
  );
}
